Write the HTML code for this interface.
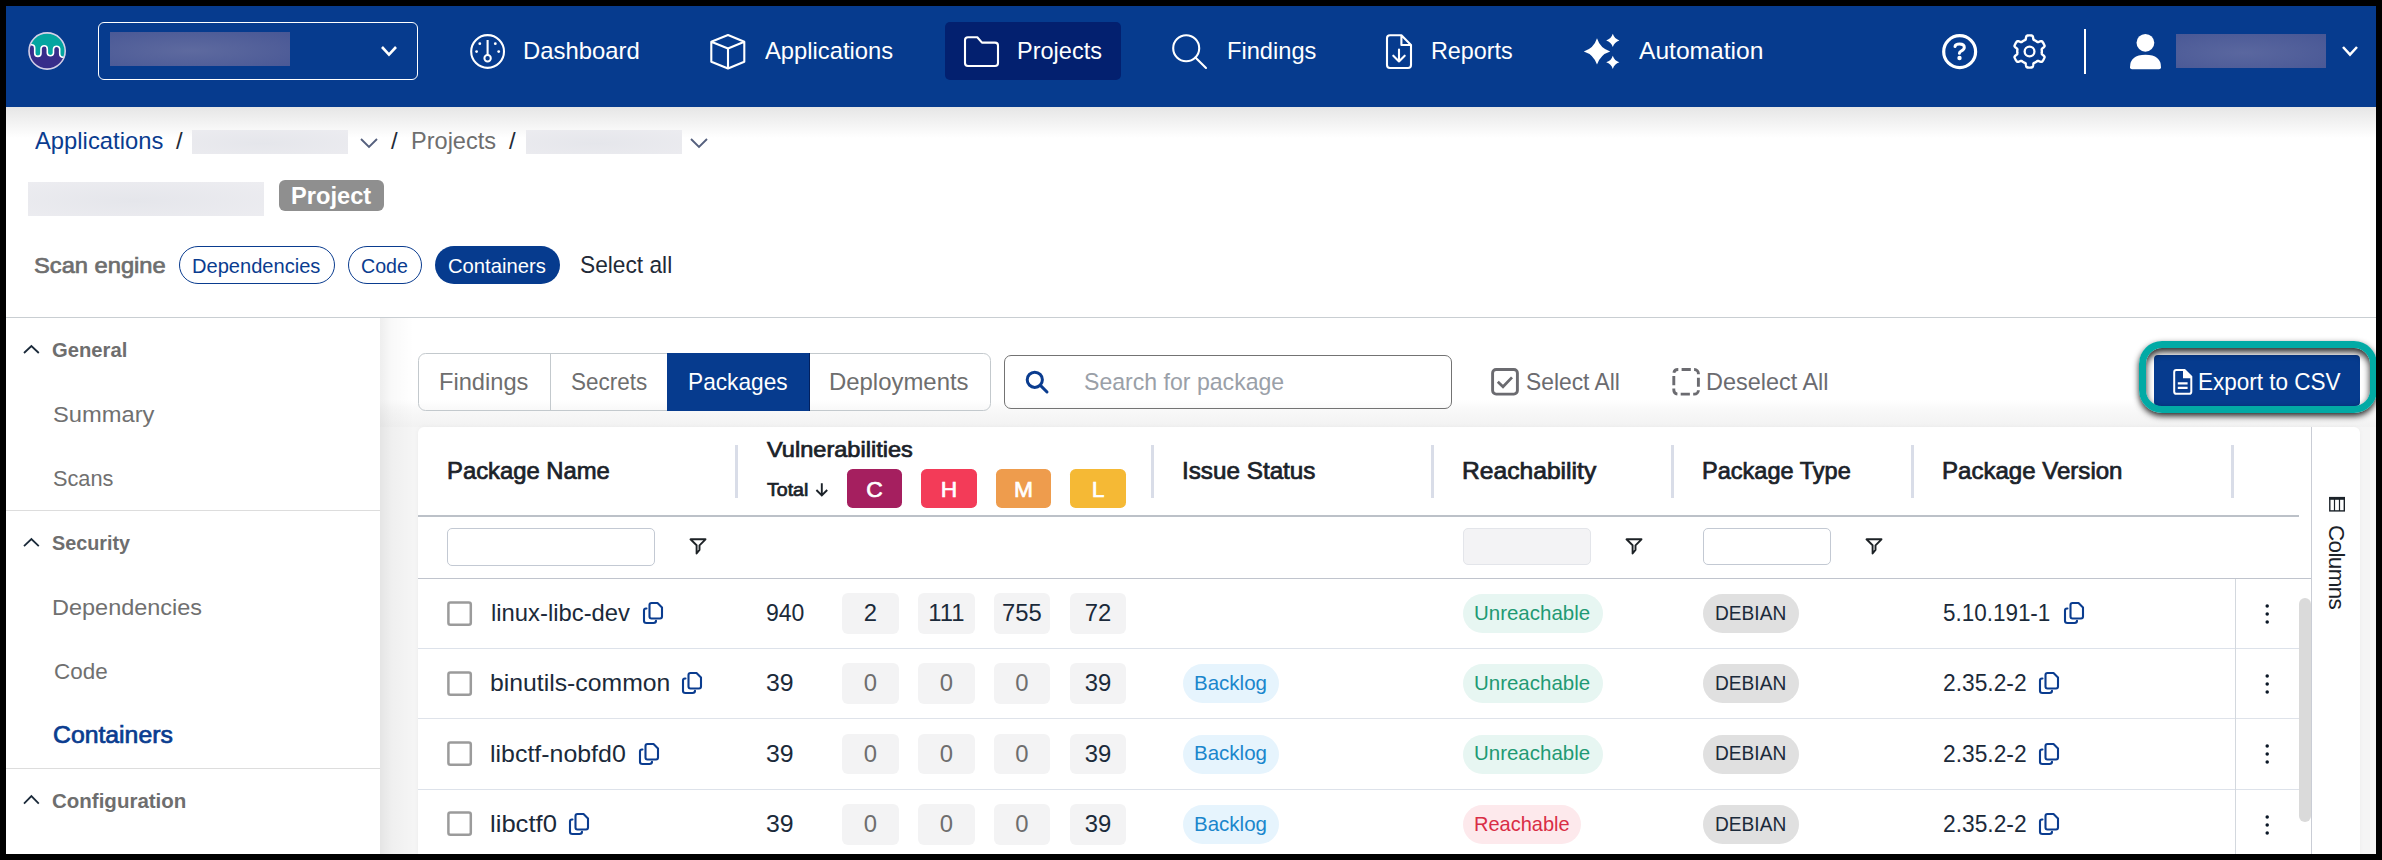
<!DOCTYPE html><html><head><meta charset="utf-8"><style>
html,body{margin:0;padding:0;width:2382px;height:860px;overflow:hidden;background:#000}
body{position:relative;font-family:"Liberation Sans",sans-serif}
.t{position:absolute;white-space:nowrap;font-family:"Liberation Sans",sans-serif}
svg{overflow:visible}
</style></head><body>
<div style="position:absolute;left:6.00px;top:6.00px;width:2370.00px;height:848.00px;background:#ffffff"></div>
<div style="position:absolute;left:6.00px;top:6.00px;width:2370.00px;height:101.00px;background:#063b8e"></div>
<div style="position:absolute;left:6.00px;top:107.00px;width:2370.00px;height:31.00px;background:linear-gradient(#e6e6e6,rgba(255,255,255,0))"></div>
<svg style="position:absolute;left:26.00px;top:30.00px;" width="42.00" height="42.00" viewBox="26.00 30.00 42.00 42.00"><defs><clipPath id="lc"><circle cx="47.1" cy="51" r="18.3"/></clipPath></defs><circle cx="47.1" cy="51" r="18.5" fill="#372d8a"/><g clip-path="url(#lc)"><path d="M28 44.8 L31.5 44.8 Q34.7 44.8 34.7 48 L34.7 53.2 A3.15 3.15 0 0 0 41 53.2 L41 48.9 A3.15 3.15 0 0 1 47.3 48.9 L47.3 53.2 A3.15 3.15 0 0 0 53.5 53.2 L53.5 48.9 A3.15 3.15 0 0 1 59.7 48.9 L59.7 53.4 Q59.7 57 63 57.3 L67 57.6 L67 30 L27 30 Z" fill="#03a5a0"/><path d="M28 44.8 L31.5 44.8 Q34.7 44.8 34.7 48 L34.7 53.2 A3.15 3.15 0 0 0 41 53.2 L41 48.9 A3.15 3.15 0 0 1 47.3 48.9 L47.3 53.2 A3.15 3.15 0 0 0 53.5 53.2 L53.5 48.9 A3.15 3.15 0 0 1 59.7 48.9 L59.7 53.4 Q59.7 57 63 57.3 L67 57.6" fill="none" stroke="#ffffff" stroke-width="1.6"/></g><circle cx="47.1" cy="51" r="18.1" fill="none" stroke="#d3d0e8" stroke-width="1.6"/></svg>
<div style="position:absolute;left:98.00px;top:22.00px;width:320.00px;height:58.00px;box-sizing:border-box;border:1.6px solid #ffffff;border-radius:6px"></div>
<div style="position:absolute;left:110.00px;top:32.00px;width:180.00px;height:34.00px;background:radial-gradient(ellipse at 45% 55%,#5e6a9f,#485795)"></div>
<svg style="position:absolute;left:379.00px;top:44.20px;" width="20.00" height="13.60" viewBox="379.00 44.20 20.00 13.60"><path d="M382.00 47.20 L389.00 54.80 L396.00 47.20" fill="none" stroke="#ffffff" stroke-width="2.60" stroke-linecap="butt" stroke-linejoin="miter"/></svg>
<div style="position:absolute;left:945.00px;top:22.00px;width:176.00px;height:58.00px;background:#03206f;border-radius:5px"></div>
<svg style="position:absolute;left:465.00px;top:29.00px;" width="46.00" height="46.00" viewBox="465.00 29.00 46.00 46.00"><circle cx="487.6" cy="51.5" r="16.4" fill="none" stroke="#ffffff" stroke-width="2.1"/><line x1="487.6" y1="40" x2="487.6" y2="55" stroke="#ffffff" stroke-width="2.1"/><circle cx="487.6" cy="58.3" r="3.2" fill="none" stroke="#ffffff" stroke-width="2"/><circle cx="479.8" cy="43.7" r="1.4" fill="#ffffff"/><circle cx="495.3" cy="43.7" r="1.4" fill="#ffffff"/><circle cx="476.6" cy="51.6" r="1.4" fill="#ffffff"/><circle cx="498.7" cy="51.6" r="1.4" fill="#ffffff"/></svg>
<svg style="position:absolute;left:705.00px;top:30.00px;" width="46.00" height="44.00" viewBox="705.00 30.00 46.00 44.00"><path d="M728 35 L744.3 41.8 L744.3 61.8 L728 68.5 L711.3 61.8 L711.3 41.8 Z M711.3 41.8 L728 48.5 L744.3 41.8 M728 48.5 L728 68.5" fill="none" stroke="#ffffff" stroke-width="2.1" stroke-linejoin="round"/></svg>
<svg style="position:absolute;left:960.00px;top:32.00px;" width="44.00" height="40.00" viewBox="960.00 32.00 44.00 40.00"><path d="M968 37.2 H977.3 L982 42.6 H995 Q998 42.6 998 45.6 V63 Q998 66 995 66 H968 Q965 66 965 63 V40.2 Q965 37.2 968 37.2 Z" fill="none" stroke="#ffffff" stroke-width="2.1" stroke-linejoin="round"/></svg>
<svg style="position:absolute;left:1168.00px;top:30.00px;" width="44.00" height="44.00" viewBox="1168.00 30.00 44.00 44.00"><circle cx="1186.2" cy="48.2" r="13" fill="none" stroke="#ffffff" stroke-width="2.1"/><line x1="1195.4" y1="57.4" x2="1206" y2="68" stroke="#ffffff" stroke-width="2.1" stroke-linecap="round"/></svg>
<svg style="position:absolute;left:1382.00px;top:30.00px;" width="34.00" height="44.00" viewBox="1382.00 30.00 34.00 44.00"><path d="M1390 35.2 H1401.4 L1411 45 V65 Q1411 68 1408 68 H1390 Q1387 68 1387 65 V38.2 Q1387 35.2 1390 35.2 Z M1401.4 35.2 V45 H1411" fill="none" stroke="#ffffff" stroke-width="2.1" stroke-linejoin="round"/><path d="M1399 49.5 V61.5 M1393.3 55.7 L1399 61.5 L1404.7 55.7" fill="none" stroke="#ffffff" stroke-width="2.1" stroke-linecap="round" stroke-linejoin="round"/></svg>
<svg style="position:absolute;left:1580.00px;top:34.00px;" width="40.00" height="34.00" viewBox="1580.00 34.00 40.00 34.00"><path d="M1597.00 38.20 Q1600.17 48.23 1610.20 51.40 Q1600.17 54.57 1597.00 64.60 Q1593.83 54.57 1583.80 51.40 Q1593.83 48.23 1597.00 38.20 Z" fill="#ffffff"/><path d="M1612.80 33.80 Q1614.38 38.82 1619.40 40.40 Q1614.38 41.98 1612.80 47.00 Q1611.22 41.98 1606.20 40.40 Q1611.22 38.82 1612.80 33.80 Z" fill="#ffffff"/><path d="M1612.80 55.70 Q1614.38 60.72 1619.40 62.30 Q1614.38 63.88 1612.80 68.90 Q1611.22 63.88 1606.20 62.30 Q1611.22 60.72 1612.80 55.70 Z" fill="#ffffff"/></svg>
<svg style="position:absolute;left:1940.00px;top:32.00px;" width="40.00" height="40.00" viewBox="1940.00 32.00 40.00 40.00"><circle cx="1959.65" cy="51.65" r="15.95" fill="none" stroke="#ffffff" stroke-width="3.2"/><path d="M1955 46.4 Q1955.4 43.9 1959.6 43.9 Q1964.3 43.9 1964.3 47.3 Q1964.3 49.5 1961.5 50.8 Q1959.4 51.8 1959.4 53.2" fill="none" stroke="#ffffff" stroke-width="3" stroke-linecap="round" stroke-linejoin="round"/><circle cx="1959.5" cy="58" r="2.2" fill="#ffffff"/></svg>
<svg style="position:absolute;left:2010.00px;top:32.00px;" width="40.00" height="40.00" viewBox="2010.00 32.00 40.00 40.00"><path d="M2041.85 51.50 L2041.85 51.71 L2041.84 51.93 L2041.83 52.14 L2041.82 52.36 L2041.80 52.57 L2041.78 52.79 L2041.76 53.00 L2041.73 53.21 L2041.70 53.42 L2041.66 53.64 L2041.70 53.86 L2041.88 54.12 L2042.17 54.41 L2042.56 54.74 L2043.00 55.11 L2043.46 55.49 L2043.88 55.88 L2044.24 56.27 L2044.49 56.64 L2044.61 56.98 L2044.58 57.27 L2044.48 57.53 L2044.37 57.79 L2044.26 58.05 L2044.14 58.30 L2044.02 58.56 L2043.90 58.81 L2043.77 59.06 L2043.63 59.31 L2043.49 59.55 L2043.35 59.79 L2043.20 60.03 L2043.05 60.27 L2042.90 60.50 L2042.74 60.73 L2042.58 60.96 L2042.41 61.19 L2042.24 61.41 L2042.06 61.63 L2041.82 61.80 L2041.47 61.86 L2041.03 61.83 L2040.51 61.72 L2039.96 61.55 L2039.40 61.35 L2038.87 61.15 L2038.39 60.98 L2037.98 60.86 L2037.67 60.84 L2037.46 60.92 L2037.29 61.06 L2037.12 61.19 L2036.95 61.32 L2036.78 61.45 L2036.60 61.58 L2036.43 61.70 L2036.25 61.82 L2036.07 61.93 L2035.88 62.04 L2035.70 62.15 L2035.51 62.26 L2035.32 62.36 L2035.13 62.46 L2034.94 62.56 L2034.75 62.65 L2034.55 62.74 L2034.36 62.82 L2034.16 62.90 L2033.96 62.98 L2033.76 63.06 L2033.58 63.20 L2033.44 63.48 L2033.34 63.89 L2033.25 64.39 L2033.16 64.95 L2033.05 65.54 L2032.92 66.11 L2032.76 66.61 L2032.56 67.01 L2032.33 67.28 L2032.07 67.40 L2031.79 67.44 L2031.51 67.48 L2031.23 67.51 L2030.95 67.54 L2030.67 67.56 L2030.39 67.58 L2030.11 67.59 L2029.83 67.60 L2029.55 67.60 L2029.27 67.60 L2028.99 67.59 L2028.71 67.58 L2028.43 67.56 L2028.15 67.54 L2027.87 67.51 L2027.59 67.48 L2027.31 67.44 L2027.03 67.40 L2026.77 67.28 L2026.54 67.01 L2026.34 66.61 L2026.18 66.11 L2026.05 65.54 L2025.94 64.95 L2025.85 64.39 L2025.76 63.89 L2025.66 63.48 L2025.52 63.20 L2025.34 63.06 L2025.14 62.98 L2024.94 62.90 L2024.74 62.82 L2024.55 62.74 L2024.35 62.65 L2024.16 62.56 L2023.97 62.46 L2023.78 62.36 L2023.59 62.26 L2023.40 62.15 L2023.22 62.04 L2023.03 61.93 L2022.85 61.82 L2022.67 61.70 L2022.50 61.58 L2022.32 61.45 L2022.15 61.32 L2021.98 61.19 L2021.81 61.06 L2021.64 60.92 L2021.43 60.84 L2021.12 60.86 L2020.71 60.98 L2020.23 61.15 L2019.70 61.35 L2019.14 61.55 L2018.59 61.72 L2018.07 61.83 L2017.63 61.86 L2017.28 61.80 L2017.04 61.63 L2016.86 61.41 L2016.69 61.19 L2016.52 60.96 L2016.36 60.73 L2016.20 60.50 L2016.05 60.27 L2015.90 60.03 L2015.75 59.79 L2015.61 59.55 L2015.47 59.31 L2015.33 59.06 L2015.20 58.81 L2015.08 58.56 L2014.96 58.30 L2014.84 58.05 L2014.73 57.79 L2014.62 57.53 L2014.52 57.27 L2014.49 56.98 L2014.61 56.64 L2014.86 56.27 L2015.22 55.88 L2015.64 55.49 L2016.10 55.11 L2016.54 54.74 L2016.93 54.41 L2017.22 54.12 L2017.40 53.86 L2017.44 53.64 L2017.40 53.42 L2017.37 53.21 L2017.34 53.00 L2017.32 52.79 L2017.30 52.57 L2017.28 52.36 L2017.27 52.14 L2017.26 51.93 L2017.25 51.71 L2017.25 51.50 L2017.25 51.29 L2017.26 51.07 L2017.27 50.86 L2017.28 50.64 L2017.30 50.43 L2017.32 50.21 L2017.34 50.00 L2017.37 49.79 L2017.40 49.58 L2017.44 49.36 L2017.40 49.14 L2017.22 48.88 L2016.93 48.59 L2016.54 48.26 L2016.10 47.89 L2015.64 47.51 L2015.22 47.12 L2014.86 46.73 L2014.61 46.36 L2014.49 46.02 L2014.52 45.73 L2014.62 45.47 L2014.73 45.21 L2014.84 44.95 L2014.96 44.70 L2015.08 44.44 L2015.20 44.19 L2015.33 43.94 L2015.47 43.69 L2015.61 43.45 L2015.75 43.21 L2015.90 42.97 L2016.05 42.73 L2016.20 42.50 L2016.36 42.27 L2016.52 42.04 L2016.69 41.81 L2016.86 41.59 L2017.04 41.37 L2017.28 41.20 L2017.63 41.14 L2018.07 41.17 L2018.59 41.28 L2019.14 41.45 L2019.70 41.65 L2020.23 41.85 L2020.71 42.02 L2021.12 42.14 L2021.43 42.16 L2021.64 42.08 L2021.81 41.94 L2021.98 41.81 L2022.15 41.68 L2022.32 41.55 L2022.50 41.42 L2022.67 41.30 L2022.85 41.18 L2023.03 41.07 L2023.22 40.96 L2023.40 40.85 L2023.59 40.74 L2023.78 40.64 L2023.97 40.54 L2024.16 40.44 L2024.35 40.35 L2024.55 40.26 L2024.74 40.18 L2024.94 40.10 L2025.14 40.02 L2025.34 39.94 L2025.52 39.80 L2025.66 39.52 L2025.76 39.11 L2025.85 38.61 L2025.94 38.05 L2026.05 37.46 L2026.18 36.89 L2026.34 36.39 L2026.54 35.99 L2026.77 35.72 L2027.03 35.60 L2027.31 35.56 L2027.59 35.52 L2027.87 35.49 L2028.15 35.46 L2028.43 35.44 L2028.71 35.42 L2028.99 35.41 L2029.27 35.40 L2029.55 35.40 L2029.83 35.40 L2030.11 35.41 L2030.39 35.42 L2030.67 35.44 L2030.95 35.46 L2031.23 35.49 L2031.51 35.52 L2031.79 35.56 L2032.07 35.60 L2032.33 35.72 L2032.56 35.99 L2032.76 36.39 L2032.92 36.89 L2033.05 37.46 L2033.16 38.05 L2033.25 38.61 L2033.34 39.11 L2033.44 39.52 L2033.58 39.80 L2033.76 39.94 L2033.96 40.02 L2034.16 40.10 L2034.36 40.18 L2034.55 40.26 L2034.75 40.35 L2034.94 40.44 L2035.13 40.54 L2035.32 40.64 L2035.51 40.74 L2035.70 40.85 L2035.88 40.96 L2036.07 41.07 L2036.25 41.18 L2036.43 41.30 L2036.60 41.42 L2036.78 41.55 L2036.95 41.68 L2037.12 41.81 L2037.29 41.94 L2037.46 42.08 L2037.67 42.16 L2037.98 42.14 L2038.39 42.02 L2038.87 41.85 L2039.40 41.65 L2039.96 41.45 L2040.51 41.28 L2041.03 41.17 L2041.47 41.14 L2041.82 41.20 L2042.06 41.37 L2042.24 41.59 L2042.41 41.81 L2042.58 42.04 L2042.74 42.27 L2042.90 42.50 L2043.05 42.73 L2043.20 42.97 L2043.35 43.21 L2043.49 43.45 L2043.63 43.69 L2043.77 43.94 L2043.90 44.19 L2044.02 44.44 L2044.14 44.70 L2044.26 44.95 L2044.37 45.21 L2044.48 45.47 L2044.58 45.73 L2044.61 46.02 L2044.49 46.36 L2044.24 46.73 L2043.88 47.12 L2043.46 47.51 L2043.00 47.89 L2042.56 48.26 L2042.17 48.59 L2041.88 48.88 L2041.70 49.14 L2041.66 49.36 L2041.70 49.58 L2041.73 49.79 L2041.76 50.00 L2041.78 50.21 L2041.80 50.43 L2041.82 50.64 L2041.83 50.86 L2041.84 51.07 L2041.85 51.29 Z" fill="none" stroke="#ffffff" stroke-width="2.4" stroke-linejoin="round"/><circle cx="2029.55" cy="51.5" r="4.9" fill="none" stroke="#ffffff" stroke-width="2.3"/></svg>
<div style="position:absolute;left:2084.00px;top:29.00px;width:2.00px;height:45.00px;background:#ffffff"></div>
<svg style="position:absolute;left:2126.00px;top:32.00px;" width="40.00" height="40.00" viewBox="2126.00 32.00 40.00 40.00"><circle cx="2145.4" cy="42.8" r="8.9" fill="#ffffff"/><path d="M2130 67.2 Q2130 54.7 2145.5 54.7 Q2161 54.7 2161 67.2 Q2161 69.2 2159 69.2 H2132 Q2130 69.2 2130 67.2 Z" fill="#ffffff"/></svg>
<div style="position:absolute;left:2176.00px;top:34.00px;width:150.00px;height:34.00px;background:radial-gradient(ellipse at 45% 55%,#5a679f,#485795)"></div>
<svg style="position:absolute;left:2340.00px;top:44.40px;" width="20.00" height="13.60" viewBox="2340.00 44.40 20.00 13.60"><path d="M2343.00 47.40 L2350.00 55.00 L2357.00 47.40" fill="none" stroke="#ffffff" stroke-width="2.50" stroke-linecap="butt" stroke-linejoin="miter"/></svg>
<div style="position:absolute;left:192.00px;top:130.00px;width:156.00px;height:24.00px;background:radial-gradient(ellipse at 45% 55%,#e5e6eb,#ececf0)"></div>
<div style="position:absolute;left:526.00px;top:130.00px;width:156.00px;height:24.00px;background:radial-gradient(ellipse at 45% 55%,#e5e6eb,#ececf0)"></div>
<svg style="position:absolute;left:357.50px;top:135.80px;" width="22.00" height="14.00" viewBox="357.50 135.80 22.00 14.00"><path d="M360.50 138.80 L368.50 146.80 L376.50 138.80" fill="none" stroke="#55607e" stroke-width="1.90" stroke-linecap="butt" stroke-linejoin="miter"/></svg>
<svg style="position:absolute;left:687.50px;top:135.80px;" width="22.00" height="14.00" viewBox="687.50 135.80 22.00 14.00"><path d="M690.50 138.80 L698.50 146.80 L706.50 138.80" fill="none" stroke="#55607e" stroke-width="1.90" stroke-linecap="butt" stroke-linejoin="miter"/></svg>
<div style="position:absolute;left:28.00px;top:182.00px;width:236.00px;height:34.00px;background:radial-gradient(ellipse at 45% 55%,#e5e6eb,#ededf1)"></div>
<div style="position:absolute;left:279.00px;top:180.00px;width:105.00px;height:31.00px;background:#8f8f8f;border-radius:6px"></div>
<div style="position:absolute;left:179.20px;top:246.10px;width:155.50px;height:38.40px;box-sizing:border-box;border:1.5px solid #0a3c8f;border-radius:20px"></div>
<div style="position:absolute;left:347.90px;top:246.10px;width:73.90px;height:38.40px;box-sizing:border-box;border:1.5px solid #0a3c8f;border-radius:20px"></div>
<div style="position:absolute;left:434.90px;top:246.10px;width:124.90px;height:38.40px;background:#063b8e;border-radius:20px"></div>
<div style="position:absolute;left:6.00px;top:317.00px;width:2370.00px;height:1.40px;background:#c9ced2"></div>
<div style="position:absolute;left:380.00px;top:318.30px;width:1996.00px;height:535.70px;background:#f5f5f5"></div>
<div style="position:absolute;left:380.00px;top:318.30px;width:1996.00px;height:81.70px;background:#ffffff"></div>
<div style="position:absolute;left:380.00px;top:400.00px;width:1996.00px;height:27.00px;background:linear-gradient(#ffffff,#f8f8f8 40%,#f2f2f2)"></div>
<div style="position:absolute;left:380.00px;top:318.30px;width:34.00px;height:535.70px;background:linear-gradient(90deg,rgba(0,0,0,0.065),rgba(0,0,0,0.025) 35%,rgba(0,0,0,0))"></div>
<div style="position:absolute;left:6.00px;top:509.50px;width:374.00px;height:1.30px;background:#dddddd"></div>
<div style="position:absolute;left:6.00px;top:768.00px;width:374.00px;height:1.30px;background:#dddddd"></div>
<svg style="position:absolute;left:20.50px;top:342.60px;" width="20.80" height="13.00" viewBox="20.50 342.60 20.80 13.00"><path d="M23.50 352.60 L30.90 345.60 L38.30 352.60" fill="none" stroke="#1b2a3a" stroke-width="1.80"/></svg>
<svg style="position:absolute;left:20.50px;top:536.40px;" width="20.80" height="13.10" viewBox="20.50 536.40 20.80 13.10"><path d="M23.50 546.50 L30.90 539.40 L38.30 546.50" fill="none" stroke="#1b2a3a" stroke-width="1.80"/></svg>
<svg style="position:absolute;left:20.50px;top:793.00px;" width="20.80" height="13.60" viewBox="20.50 793.00 20.80 13.60"><path d="M23.50 803.60 L30.90 796.00 L38.30 803.60" fill="none" stroke="#1b2a3a" stroke-width="1.80"/></svg>
<div style="position:absolute;left:418.00px;top:353.00px;width:573.00px;height:58.00px;box-sizing:border-box;border:1.4px solid #c3c9cd;border-radius:7.5px"></div>
<div style="position:absolute;left:550.00px;top:353.00px;width:1.20px;height:58.00px;background:#c3c9cd"></div>
<div style="position:absolute;left:667.00px;top:353.00px;width:142.50px;height:58.00px;background:#063b8e"></div>
<div style="position:absolute;left:808.60px;top:353.00px;width:1.00px;height:58.00px;background:#02205e"></div>
<div style="position:absolute;left:1004.00px;top:355.00px;width:448.00px;height:54.00px;box-sizing:border-box;border:1.5px solid #737373;border-radius:7px"></div>
<svg style="position:absolute;left:1022.00px;top:366.00px;" width="30.00" height="30.00" viewBox="1022.00 366.00 30.00 30.00"><circle cx="1034.8" cy="379.8" r="7.6" fill="none" stroke="#0a3c8f" stroke-width="3"/><line x1="1040.4" y1="385.4" x2="1047" y2="392" stroke="#0a3c8f" stroke-width="3" stroke-linecap="round"/></svg>
<svg style="position:absolute;left:1488.00px;top:365.00px;" width="34.00" height="34.00" viewBox="1488.00 365.00 34.00 34.00"><rect x="1492.6" y="369.5" width="24.8" height="24.6" rx="3.5" fill="none" stroke="#6b6b70" stroke-width="2.9"/><path d="M1497.8 381.8 L1503 386.8 L1512 377.4" fill="none" stroke="#6b6b70" stroke-width="2.8"/></svg>
<svg style="position:absolute;left:1669.00px;top:365.00px;" width="34.00" height="34.00" viewBox="1669.00 365.00 34.00 34.00"><rect x="1673.8" y="369.5" width="24.6" height="24.6" rx="4" fill="none" stroke="#6b6b70" stroke-width="2.9" stroke-dasharray="7.28 3.3 9.2 3.3" stroke-dashoffset="6.78"/></svg>
<div style="position:absolute;left:2154.20px;top:354.90px;width:205.90px;height:51.10px;background:#063b8e;border-radius:4px"></div>
<div style="position:absolute;left:2139px;top:341px;width:238px;height:72px;box-sizing:border-box;border:7.8px solid #02aaa5;border-radius:23px;box-shadow:0 3px 6px rgba(0,0,0,0.85), inset 0 4px 7px rgba(0,0,0,0.85)"></div>
<svg style="position:absolute;left:2170.00px;top:366.00px;" width="26.00" height="32.00" viewBox="2170.00 366.00 26.00 32.00"><path d="M2176.3 370 H2184.6 L2191.3 376.7 V391.7 Q2191.3 393.8 2189.2 393.8 H2176.3 Q2174.2 393.8 2174.2 391.7 V372.1 Q2174.2 370 2176.3 370 Z" fill="none" stroke="#ffffff" stroke-width="2"/><path d="M2184 370 V377.3 H2191.3" fill="#ffffff" stroke="#ffffff" stroke-width="2"/><path d="M2177.8 383.3 H2187.6 M2177.8 387.8 H2187.6" stroke="#ffffff" stroke-width="2.2"/></svg>
<div style="position:absolute;left:418.00px;top:427.00px;width:1942.00px;height:427.00px;background:#ffffff;border-radius:6px 6px 0 0;box-shadow:0 0 5px rgba(0,0,0,0.04)"></div>
<div style="position:absolute;left:418.00px;top:515.00px;width:1881.00px;height:2.00px;background:#bcc1c8"></div>
<div style="position:absolute;left:418.00px;top:578.00px;width:1893.00px;height:1.00px;background:#c0c4cd"></div>
<div style="position:absolute;left:418.00px;top:648.00px;width:1881.00px;height:1.00px;background:#dde2ea"></div>
<div style="position:absolute;left:418.00px;top:718.20px;width:1881.00px;height:1.00px;background:#dfe3ea"></div>
<div style="position:absolute;left:418.00px;top:789.00px;width:1881.00px;height:1.00px;background:#dde2ea"></div>
<div style="position:absolute;left:735.00px;top:445.00px;width:3.00px;height:53.00px;background:#d9dde8"></div>
<div style="position:absolute;left:1151.00px;top:445.00px;width:3.00px;height:53.00px;background:#d9dde8"></div>
<div style="position:absolute;left:1430.80px;top:445.00px;width:3.00px;height:53.00px;background:#d9dde8"></div>
<div style="position:absolute;left:1670.80px;top:445.00px;width:3.00px;height:53.00px;background:#d9dde8"></div>
<div style="position:absolute;left:1910.80px;top:445.00px;width:3.00px;height:53.00px;background:#d9dde8"></div>
<div style="position:absolute;left:2231.00px;top:445.00px;width:3.00px;height:53.00px;background:#d9dde8"></div>
<div style="position:absolute;left:2234.90px;top:578.80px;width:1.20px;height:275.20px;background:#d3d8de"></div>
<div style="position:absolute;left:2311.00px;top:427.00px;width:1.20px;height:427.00px;background:#c9cdd5"></div>
<div style="position:absolute;left:2299.00px;top:598.00px;width:12.00px;height:223.50px;background:#dadada;border-radius:6px"></div>
<div style="position:absolute;left:847.00px;top:469.10px;width:55.00px;height:38.80px;background:#a51f5f;border-radius:5.6px"></div>
<div style="position:absolute;left:921.20px;top:469.10px;width:55.60px;height:38.80px;background:#f33b58;border-radius:5.6px"></div>
<div style="position:absolute;left:996.20px;top:469.10px;width:54.80px;height:38.80px;background:#ee9c4d;border-radius:5.6px"></div>
<div style="position:absolute;left:1070.00px;top:469.10px;width:56.00px;height:38.80px;background:#f5b935;border-radius:5.6px"></div>
<svg style="position:absolute;left:812.00px;top:480.00px;" width="20.00" height="20.00" viewBox="812.00 480.00 20.00 20.00"><path d="M821.8 483.2 V495.4 M816.4 490 L821.8 495.4 L827.2 490" fill="none" stroke="#1b2229" stroke-width="1.9"/></svg>
<div style="position:absolute;left:447.30px;top:528.30px;width:207.50px;height:37.30px;box-sizing:border-box;border:1.5px solid #c3c9d3;border-radius:5px"></div>
<div style="position:absolute;left:1463.00px;top:528.00px;width:128.00px;height:37.00px;box-sizing:border-box;border:1px solid #e3e5ea;border-radius:5px;background:#f3f3f5"></div>
<div style="position:absolute;left:1703.00px;top:528.00px;width:128.00px;height:37.00px;box-sizing:border-box;border:1.5px solid #c3c9d3;border-radius:5px"></div>
<svg style="position:absolute;left:686.50px;top:536.30px;" width="22.00" height="20.00" viewBox="686.50 536.30 22.00 20.00"><path d="M690.00 539.60 H705.00 L699.00 545.60 V550.20 L696.10 553.80 V545.60 Z" fill="none" stroke="#1d2226" stroke-width="1.9" stroke-linejoin="round"/></svg>
<svg style="position:absolute;left:1622.50px;top:536.30px;" width="22.00" height="20.00" viewBox="1622.50 536.30 22.00 20.00"><path d="M1626.00 539.60 H1641.00 L1635.00 545.60 V550.20 L1632.10 553.80 V545.60 Z" fill="none" stroke="#1d2226" stroke-width="1.9" stroke-linejoin="round"/></svg>
<svg style="position:absolute;left:1862.50px;top:536.30px;" width="22.00" height="20.00" viewBox="1862.50 536.30 22.00 20.00"><path d="M1866.00 539.60 H1881.00 L1875.00 545.60 V550.20 L1872.10 553.80 V545.60 Z" fill="none" stroke="#1d2226" stroke-width="1.9" stroke-linejoin="round"/></svg>
<svg style="position:absolute;left:444.00px;top:597.50px;" width="32.00" height="32.00" viewBox="444.00 597.50 32.00 32.00"><rect x="448.4" y="601.90" width="22.4" height="22.4" rx="2" fill="none" stroke="#9b9b9b" stroke-width="2.5"/></svg>
<div style="position:absolute;left:842.00px;top:593.10px;width:56.90px;height:40.70px;background:#f3f3f4;border-radius:6px"></div>
<div style="position:absolute;left:918.00px;top:593.10px;width:56.80px;height:40.70px;background:#f3f3f4;border-radius:6px"></div>
<div style="position:absolute;left:994.00px;top:593.10px;width:55.80px;height:40.70px;background:#f3f3f4;border-radius:6px"></div>
<div style="position:absolute;left:1070.00px;top:593.10px;width:56.00px;height:40.70px;background:#f3f3f4;border-radius:6px"></div>
<div style="position:absolute;left:1463.00px;top:594.10px;width:140.00px;height:38.90px;background:#e7f6f2;border-radius:20px"></div>
<div style="position:absolute;left:1703.00px;top:594.10px;width:96.00px;height:38.90px;background:#e0e0e0;border-radius:20px"></div>
<svg style="position:absolute;left:2263.00px;top:602.80px;" width="8.00" height="6.00" viewBox="2263.00 602.80 8.00 6.00"><circle cx="2267.2" cy="605.80" r="1.75" fill="#0b1726"/></svg>
<svg style="position:absolute;left:2263.00px;top:610.70px;" width="8.00" height="6.00" viewBox="2263.00 610.70 8.00 6.00"><circle cx="2267.2" cy="613.70" r="1.75" fill="#0b1726"/></svg>
<svg style="position:absolute;left:2263.00px;top:618.60px;" width="8.00" height="6.00" viewBox="2263.00 618.60 8.00 6.00"><circle cx="2267.2" cy="621.60" r="1.75" fill="#0b1726"/></svg>
<svg style="position:absolute;left:444.00px;top:667.80px;" width="32.00" height="32.00" viewBox="444.00 667.80 32.00 32.00"><rect x="448.4" y="672.20" width="22.4" height="22.4" rx="2" fill="none" stroke="#9b9b9b" stroke-width="2.5"/></svg>
<div style="position:absolute;left:842.00px;top:663.40px;width:56.90px;height:40.70px;background:#f3f3f4;border-radius:6px"></div>
<div style="position:absolute;left:918.00px;top:663.40px;width:56.80px;height:40.70px;background:#f3f3f4;border-radius:6px"></div>
<div style="position:absolute;left:994.00px;top:663.40px;width:55.80px;height:40.70px;background:#f3f3f4;border-radius:6px"></div>
<div style="position:absolute;left:1070.00px;top:663.40px;width:56.00px;height:40.70px;background:#f3f3f4;border-radius:6px"></div>
<div style="position:absolute;left:1183.00px;top:664.30px;width:96.00px;height:39.00px;background:#e6f4fd;border-radius:20px"></div>
<div style="position:absolute;left:1463.00px;top:664.40px;width:140.00px;height:38.90px;background:#e7f6f2;border-radius:20px"></div>
<div style="position:absolute;left:1703.00px;top:664.40px;width:96.00px;height:38.90px;background:#e0e0e0;border-radius:20px"></div>
<svg style="position:absolute;left:2263.00px;top:673.10px;" width="8.00" height="6.00" viewBox="2263.00 673.10 8.00 6.00"><circle cx="2267.2" cy="676.10" r="1.75" fill="#0b1726"/></svg>
<svg style="position:absolute;left:2263.00px;top:681.00px;" width="8.00" height="6.00" viewBox="2263.00 681.00 8.00 6.00"><circle cx="2267.2" cy="684.00" r="1.75" fill="#0b1726"/></svg>
<svg style="position:absolute;left:2263.00px;top:688.90px;" width="8.00" height="6.00" viewBox="2263.00 688.90 8.00 6.00"><circle cx="2267.2" cy="691.90" r="1.75" fill="#0b1726"/></svg>
<svg style="position:absolute;left:444.00px;top:738.10px;" width="32.00" height="32.00" viewBox="444.00 738.10 32.00 32.00"><rect x="448.4" y="742.50" width="22.4" height="22.4" rx="2" fill="none" stroke="#9b9b9b" stroke-width="2.5"/></svg>
<div style="position:absolute;left:842.00px;top:733.70px;width:56.90px;height:40.70px;background:#f3f3f4;border-radius:6px"></div>
<div style="position:absolute;left:918.00px;top:733.70px;width:56.80px;height:40.70px;background:#f3f3f4;border-radius:6px"></div>
<div style="position:absolute;left:994.00px;top:733.70px;width:55.80px;height:40.70px;background:#f3f3f4;border-radius:6px"></div>
<div style="position:absolute;left:1070.00px;top:733.70px;width:56.00px;height:40.70px;background:#f3f3f4;border-radius:6px"></div>
<div style="position:absolute;left:1183.00px;top:734.60px;width:96.00px;height:39.00px;background:#e6f4fd;border-radius:20px"></div>
<div style="position:absolute;left:1463.00px;top:734.70px;width:140.00px;height:38.90px;background:#e7f6f2;border-radius:20px"></div>
<div style="position:absolute;left:1703.00px;top:734.70px;width:96.00px;height:38.90px;background:#e0e0e0;border-radius:20px"></div>
<svg style="position:absolute;left:2263.00px;top:743.40px;" width="8.00" height="6.00" viewBox="2263.00 743.40 8.00 6.00"><circle cx="2267.2" cy="746.40" r="1.75" fill="#0b1726"/></svg>
<svg style="position:absolute;left:2263.00px;top:751.30px;" width="8.00" height="6.00" viewBox="2263.00 751.30 8.00 6.00"><circle cx="2267.2" cy="754.30" r="1.75" fill="#0b1726"/></svg>
<svg style="position:absolute;left:2263.00px;top:759.20px;" width="8.00" height="6.00" viewBox="2263.00 759.20 8.00 6.00"><circle cx="2267.2" cy="762.20" r="1.75" fill="#0b1726"/></svg>
<svg style="position:absolute;left:444.00px;top:808.40px;" width="32.00" height="32.00" viewBox="444.00 808.40 32.00 32.00"><rect x="448.4" y="812.80" width="22.4" height="22.4" rx="2" fill="none" stroke="#9b9b9b" stroke-width="2.5"/></svg>
<div style="position:absolute;left:842.00px;top:804.00px;width:56.90px;height:40.70px;background:#f3f3f4;border-radius:6px"></div>
<div style="position:absolute;left:918.00px;top:804.00px;width:56.80px;height:40.70px;background:#f3f3f4;border-radius:6px"></div>
<div style="position:absolute;left:994.00px;top:804.00px;width:55.80px;height:40.70px;background:#f3f3f4;border-radius:6px"></div>
<div style="position:absolute;left:1070.00px;top:804.00px;width:56.00px;height:40.70px;background:#f3f3f4;border-radius:6px"></div>
<div style="position:absolute;left:1183.00px;top:804.90px;width:96.00px;height:39.00px;background:#e6f4fd;border-radius:20px"></div>
<div style="position:absolute;left:1463.00px;top:805.00px;width:118.00px;height:38.90px;background:#fde9ec;border-radius:20px"></div>
<div style="position:absolute;left:1703.00px;top:805.00px;width:96.00px;height:38.90px;background:#e0e0e0;border-radius:20px"></div>
<svg style="position:absolute;left:2263.00px;top:813.70px;" width="8.00" height="6.00" viewBox="2263.00 813.70 8.00 6.00"><circle cx="2267.2" cy="816.70" r="1.75" fill="#0b1726"/></svg>
<svg style="position:absolute;left:2263.00px;top:821.60px;" width="8.00" height="6.00" viewBox="2263.00 821.60 8.00 6.00"><circle cx="2267.2" cy="824.60" r="1.75" fill="#0b1726"/></svg>
<svg style="position:absolute;left:2263.00px;top:829.50px;" width="8.00" height="6.00" viewBox="2263.00 829.50 8.00 6.00"><circle cx="2267.2" cy="832.50" r="1.75" fill="#0b1726"/></svg>
<svg style="position:absolute;left:642.00px;top:601.00px;" width="22.00" height="24.00" viewBox="642.00 601.00 22.00 24.00"><path d="M651.50 603.00 H657.50 L662.00 607.50 V616.50 Q662.00 618.50 660.00 618.50 H651.50 Q649.50 618.50 649.50 616.50 V605.00 Q649.50 603.00 651.50 603.00 Z" fill="none" stroke="#0a3c8f" stroke-width="2.1" stroke-linejoin="round" stroke-linecap="round"/><path d="M646.50 608.50 H646.00 Q644.00 608.50 644.00 610.50 V621.00 Q644.00 623.00 646.50 623.00 H653.50 Q656.00 623.00 656.00 620.80" fill="none" stroke="#0a3c8f" stroke-width="2.1" stroke-linecap="round"/></svg>
<svg style="position:absolute;left:2063.20px;top:601.00px;" width="22.00" height="24.00" viewBox="2063.20 601.00 22.00 24.00"><path d="M2072.70 603.00 H2078.70 L2083.20 607.50 V616.50 Q2083.20 618.50 2081.20 618.50 H2072.70 Q2070.70 618.50 2070.70 616.50 V605.00 Q2070.70 603.00 2072.70 603.00 Z" fill="none" stroke="#0a3c8f" stroke-width="2.1" stroke-linejoin="round" stroke-linecap="round"/><path d="M2067.70 608.50 H2067.20 Q2065.20 608.50 2065.20 610.50 V621.00 Q2065.20 623.00 2067.70 623.00 H2074.70 Q2077.20 623.00 2077.20 620.80" fill="none" stroke="#0a3c8f" stroke-width="2.1" stroke-linecap="round"/></svg>
<svg style="position:absolute;left:681.40px;top:671.30px;" width="22.00" height="24.00" viewBox="681.40 671.30 22.00 24.00"><path d="M690.90 673.30 H696.90 L701.40 677.80 V686.80 Q701.40 688.80 699.40 688.80 H690.90 Q688.90 688.80 688.90 686.80 V675.30 Q688.90 673.30 690.90 673.30 Z" fill="none" stroke="#0a3c8f" stroke-width="2.1" stroke-linejoin="round" stroke-linecap="round"/><path d="M685.90 678.80 H685.40 Q683.40 678.80 683.40 680.80 V691.30 Q683.40 693.30 685.90 693.30 H692.90 Q695.40 693.30 695.40 691.10" fill="none" stroke="#0a3c8f" stroke-width="2.1" stroke-linecap="round"/></svg>
<svg style="position:absolute;left:2038.00px;top:671.30px;" width="22.00" height="24.00" viewBox="2038.00 671.30 22.00 24.00"><path d="M2047.50 673.30 H2053.50 L2058.00 677.80 V686.80 Q2058.00 688.80 2056.00 688.80 H2047.50 Q2045.50 688.80 2045.50 686.80 V675.30 Q2045.50 673.30 2047.50 673.30 Z" fill="none" stroke="#0a3c8f" stroke-width="2.1" stroke-linejoin="round" stroke-linecap="round"/><path d="M2042.50 678.80 H2042.00 Q2040.00 678.80 2040.00 680.80 V691.30 Q2040.00 693.30 2042.50 693.30 H2049.50 Q2052.00 693.30 2052.00 691.10" fill="none" stroke="#0a3c8f" stroke-width="2.1" stroke-linecap="round"/></svg>
<svg style="position:absolute;left:637.60px;top:741.60px;" width="22.00" height="24.00" viewBox="637.60 741.60 22.00 24.00"><path d="M647.10 743.60 H653.10 L657.60 748.10 V757.10 Q657.60 759.10 655.60 759.10 H647.10 Q645.10 759.10 645.10 757.10 V745.60 Q645.10 743.60 647.10 743.60 Z" fill="none" stroke="#0a3c8f" stroke-width="2.1" stroke-linejoin="round" stroke-linecap="round"/><path d="M642.10 749.10 H641.60 Q639.60 749.10 639.60 751.10 V761.60 Q639.60 763.60 642.10 763.60 H649.10 Q651.60 763.60 651.60 761.40" fill="none" stroke="#0a3c8f" stroke-width="2.1" stroke-linecap="round"/></svg>
<svg style="position:absolute;left:2038.00px;top:741.60px;" width="22.00" height="24.00" viewBox="2038.00 741.60 22.00 24.00"><path d="M2047.50 743.60 H2053.50 L2058.00 748.10 V757.10 Q2058.00 759.10 2056.00 759.10 H2047.50 Q2045.50 759.10 2045.50 757.10 V745.60 Q2045.50 743.60 2047.50 743.60 Z" fill="none" stroke="#0a3c8f" stroke-width="2.1" stroke-linejoin="round" stroke-linecap="round"/><path d="M2042.50 749.10 H2042.00 Q2040.00 749.10 2040.00 751.10 V761.60 Q2040.00 763.60 2042.50 763.60 H2049.50 Q2052.00 763.60 2052.00 761.40" fill="none" stroke="#0a3c8f" stroke-width="2.1" stroke-linecap="round"/></svg>
<svg style="position:absolute;left:567.50px;top:811.90px;" width="22.00" height="24.00" viewBox="567.50 811.90 22.00 24.00"><path d="M577.00 813.90 H583.00 L587.50 818.40 V827.40 Q587.50 829.40 585.50 829.40 H577.00 Q575.00 829.40 575.00 827.40 V815.90 Q575.00 813.90 577.00 813.90 Z" fill="none" stroke="#0a3c8f" stroke-width="2.1" stroke-linejoin="round" stroke-linecap="round"/><path d="M572.00 819.40 H571.50 Q569.50 819.40 569.50 821.40 V831.90 Q569.50 833.90 572.00 833.90 H579.00 Q581.50 833.90 581.50 831.70" fill="none" stroke="#0a3c8f" stroke-width="2.1" stroke-linecap="round"/></svg>
<svg style="position:absolute;left:2038.00px;top:811.90px;" width="22.00" height="24.00" viewBox="2038.00 811.90 22.00 24.00"><path d="M2047.50 813.90 H2053.50 L2058.00 818.40 V827.40 Q2058.00 829.40 2056.00 829.40 H2047.50 Q2045.50 829.40 2045.50 827.40 V815.90 Q2045.50 813.90 2047.50 813.90 Z" fill="none" stroke="#0a3c8f" stroke-width="2.1" stroke-linejoin="round" stroke-linecap="round"/><path d="M2042.50 819.40 H2042.00 Q2040.00 819.40 2040.00 821.40 V831.90 Q2040.00 833.90 2042.50 833.90 H2049.50 Q2052.00 833.90 2052.00 831.70" fill="none" stroke="#0a3c8f" stroke-width="2.1" stroke-linecap="round"/></svg>
<div class="t" style="left:820.50px;top:601.10px;width:100px;text-align:center;font-size:23.84px;line-height:23.84px;color:#1b2a3a">2</div>
<div class="t" style="left:896.40px;top:601.10px;width:100px;text-align:center;font-size:23.84px;line-height:23.84px;color:#1b2a3a">111</div>
<div class="t" style="left:972.00px;top:601.10px;width:100px;text-align:center;font-size:23.84px;line-height:23.84px;color:#1b2a3a">755</div>
<div class="t" style="left:1048.00px;top:601.10px;width:100px;text-align:center;font-size:23.84px;line-height:23.84px;color:#1b2a3a">72</div>
<div class="t" style="left:820.50px;top:671.40px;width:100px;text-align:center;font-size:23.84px;line-height:23.84px;color:#6e6e6e">0</div>
<div class="t" style="left:896.40px;top:671.40px;width:100px;text-align:center;font-size:23.84px;line-height:23.84px;color:#6e6e6e">0</div>
<div class="t" style="left:972.00px;top:671.40px;width:100px;text-align:center;font-size:23.84px;line-height:23.84px;color:#6e6e6e">0</div>
<div class="t" style="left:1048.00px;top:671.40px;width:100px;text-align:center;font-size:23.84px;line-height:23.84px;color:#1b2a3a">39</div>
<div class="t" style="left:820.50px;top:741.70px;width:100px;text-align:center;font-size:23.84px;line-height:23.84px;color:#6e6e6e">0</div>
<div class="t" style="left:896.40px;top:741.70px;width:100px;text-align:center;font-size:23.84px;line-height:23.84px;color:#6e6e6e">0</div>
<div class="t" style="left:972.00px;top:741.70px;width:100px;text-align:center;font-size:23.84px;line-height:23.84px;color:#6e6e6e">0</div>
<div class="t" style="left:1048.00px;top:741.70px;width:100px;text-align:center;font-size:23.84px;line-height:23.84px;color:#1b2a3a">39</div>
<div class="t" style="left:820.50px;top:812.00px;width:100px;text-align:center;font-size:23.84px;line-height:23.84px;color:#6e6e6e">0</div>
<div class="t" style="left:896.40px;top:812.00px;width:100px;text-align:center;font-size:23.84px;line-height:23.84px;color:#6e6e6e">0</div>
<div class="t" style="left:972.00px;top:812.00px;width:100px;text-align:center;font-size:23.84px;line-height:23.84px;color:#6e6e6e">0</div>
<div class="t" style="left:1048.00px;top:812.00px;width:100px;text-align:center;font-size:23.84px;line-height:23.84px;color:#1b2a3a">39</div>
<div class="t" style="left:844.50px;top:477.70px;width:60px;text-align:center;font-size:22.8px;line-height:22.8px;-webkit-text-stroke:0.7px #ffffff;color:#ffffff">C</div>
<div class="t" style="left:919.00px;top:477.70px;width:60px;text-align:center;font-size:22.8px;line-height:22.8px;-webkit-text-stroke:0.7px #ffffff;color:#ffffff">H</div>
<div class="t" style="left:993.60px;top:477.70px;width:60px;text-align:center;font-size:22.8px;line-height:22.8px;-webkit-text-stroke:0.7px #ffffff;color:#ffffff">M</div>
<div class="t" style="left:1068.00px;top:477.70px;width:60px;text-align:center;font-size:22.8px;line-height:22.8px;-webkit-text-stroke:0.7px #ffffff;color:#ffffff">L</div>
<div class="t" style="left:523.45px;top:40.00px;font-size:23.256px;line-height:23.256px;color:#ffffff;transform-origin:0 0;transform:scaleX(1.0264)">Dashboard</div>
<div class="t" style="left:764.90px;top:40.00px;font-size:23.256px;line-height:23.256px;color:#ffffff;transform-origin:0 0;transform:scaleX(1.0224)">Applications</div>
<div class="t" style="left:1017.28px;top:40.00px;font-size:23.256px;line-height:23.256px;color:#ffffff;transform-origin:0 0;transform:scaleX(1.0111)">Projects</div>
<div class="t" style="left:1226.56px;top:40.00px;font-size:23.256px;line-height:23.256px;color:#ffffff;transform-origin:0 0;transform:scaleX(1.0176)">Findings</div>
<div class="t" style="left:1431.49px;top:40.00px;font-size:23.256px;line-height:23.256px;color:#ffffff;transform-origin:0 0;transform:scaleX(1.0038)">Reports</div>
<div class="t" style="left:1639.00px;top:40.00px;font-size:23.256px;line-height:23.256px;color:#ffffff;transform-origin:0 0;transform:scaleX(1.0578)">Automation</div>
<div class="t" style="left:34.70px;top:129.30px;font-size:23.837px;line-height:23.837px;color:#0a3c8f;transform-origin:0 0;transform:scaleX(0.9984)">Applications</div>
<div class="t" style="left:176.00px;top:129.20px;font-size:23.837px;line-height:23.837px;color:#1f2a37;transform-origin:0 0;transform:scaleX(1.0000)">/</div>
<div class="t" style="left:391.00px;top:129.20px;font-size:23.837px;line-height:23.837px;color:#1f2a37;transform-origin:0 0;transform:scaleX(1.0000)">/</div>
<div class="t" style="left:411.02px;top:129.20px;font-size:23.837px;line-height:23.837px;color:#6e6e6e;transform-origin:0 0;transform:scaleX(0.9880)">Projects</div>
<div class="t" style="left:509.00px;top:129.20px;font-size:23.837px;line-height:23.837px;color:#1f2a37;transform-origin:0 0;transform:scaleX(1.0000)">/</div>
<div class="t" style="left:291.05px;top:183.50px;font-size:24.273px;line-height:24.273px;font-weight:700;color:#ffffff;transform-origin:0 0;transform:scaleX(0.9750)">Project</div>
<div class="t" style="left:34.34px;top:254.70px;font-size:22.384px;line-height:22.384px;-webkit-text-stroke:0.7px #6e6e6e;color:#6e6e6e;transform-origin:0 0;transform:scaleX(1.0585)">Scan engine</div>
<div class="t" style="left:192.37px;top:256.70px;font-size:19.767px;line-height:19.767px;color:#0a3c8f;transform-origin:0 0;transform:scaleX(1.0169)">Dependencies</div>
<div class="t" style="left:361.41px;top:256.70px;font-size:19.767px;line-height:19.767px;color:#0a3c8f;transform-origin:0 0;transform:scaleX(0.9933)">Code</div>
<div class="t" style="left:448.18px;top:256.70px;font-size:19.767px;line-height:19.767px;color:#ffffff;transform-origin:0 0;transform:scaleX(1.0245)">Containers</div>
<div class="t" style="left:579.52px;top:253.70px;font-size:23.256px;line-height:23.256px;color:#1f2a37;transform-origin:0 0;transform:scaleX(0.9772)">Select all</div>
<div class="t" style="left:52.45px;top:340.70px;font-size:19.331px;line-height:19.331px;font-weight:700;color:#6e6e6e;transform-origin:0 0;transform:scaleX(1.0457)">General</div>
<div class="t" style="left:53.07px;top:402.90px;font-size:22.965px;line-height:22.965px;color:#707070;transform-origin:0 0;transform:scaleX(1.0330)">Summary</div>
<div class="t" style="left:53.15px;top:466.70px;font-size:22.965px;line-height:22.965px;color:#707070;transform-origin:0 0;transform:scaleX(0.9468)">Scans</div>
<div class="t" style="left:51.88px;top:534.10px;font-size:19.331px;line-height:19.331px;font-weight:700;color:#6e6e6e;transform-origin:0 0;transform:scaleX(1.0227)">Security</div>
<div class="t" style="left:52.45px;top:595.90px;font-size:22.965px;line-height:22.965px;color:#707070;transform-origin:0 0;transform:scaleX(1.0229)">Dependencies</div>
<div class="t" style="left:53.52px;top:659.80px;font-size:22.965px;line-height:22.965px;color:#707070;transform-origin:0 0;transform:scaleX(0.9774)">Code</div>
<div class="t" style="left:53.25px;top:724.10px;font-size:23.547px;line-height:23.547px;-webkit-text-stroke:0.7px #0a3c8f;color:#0a3c8f;transform-origin:0 0;transform:scaleX(1.0527)">Containers</div>
<div class="t" style="left:52.04px;top:792.10px;font-size:19.331px;line-height:19.331px;font-weight:700;color:#6e6e6e;transform-origin:0 0;transform:scaleX(1.0605)">Configuration</div>
<div class="t" style="left:439.38px;top:371.00px;font-size:23.401px;line-height:23.401px;color:#6e6e6e;transform-origin:0 0;transform:scaleX(1.0116)">Findings</div>
<div class="t" style="left:571.24px;top:371.00px;font-size:23.401px;line-height:23.401px;color:#6e6e6e;transform-origin:0 0;transform:scaleX(0.9597)">Secrets</div>
<div class="t" style="left:688.06px;top:371.20px;font-size:23.401px;line-height:23.401px;color:#ffffff;transform-origin:0 0;transform:scaleX(0.9700)">Packages</div>
<div class="t" style="left:829.26px;top:371.00px;font-size:23.401px;line-height:23.401px;color:#6e6e6e;transform-origin:0 0;transform:scaleX(1.0224)">Deployments</div>
<div class="t" style="left:1084.41px;top:371.00px;font-size:23.256px;line-height:23.256px;color:#9aa0a8;transform-origin:0 0;transform:scaleX(0.9930)">Search for package</div>
<div class="t" style="left:1525.52px;top:370.90px;font-size:23.328px;line-height:23.328px;color:#6b6b70;transform-origin:0 0;transform:scaleX(0.9785)">Select All</div>
<div class="t" style="left:1706.19px;top:370.90px;font-size:23.328px;line-height:23.328px;color:#6b6b70;transform-origin:0 0;transform:scaleX(1.0051)">Deselect All</div>
<div class="t" style="left:2197.66px;top:371.00px;font-size:23.256px;line-height:23.256px;color:#ffffff;transform-origin:0 0;transform:scaleX(0.9683)">Export to CSV</div>
<div class="t" style="left:446.54px;top:459.90px;font-size:23.110px;line-height:23.110px;-webkit-text-stroke:0.7px #1b2229;color:#1b2229;transform-origin:0 0;transform:scaleX(1.0308)">Package Name</div>
<div class="t" style="left:767.05px;top:439.80px;font-size:21.512px;line-height:21.512px;-webkit-text-stroke:0.7px #1b2229;color:#1b2229;transform-origin:0 0;transform:scaleX(1.0959)">Vulnerabilities</div>
<div class="t" style="left:767.40px;top:480.80px;font-size:18.314px;line-height:18.314px;-webkit-text-stroke:0.7px #1b2229;color:#1b2229;transform-origin:0 0;transform:scaleX(1.0684)">Total</div>
<div class="t" style="left:1181.80px;top:460.00px;font-size:23.110px;line-height:23.110px;-webkit-text-stroke:0.7px #1b2229;color:#1b2229;transform-origin:0 0;transform:scaleX(1.0496)">Issue Status</div>
<div class="t" style="left:1462.37px;top:460.00px;font-size:23.110px;line-height:23.110px;-webkit-text-stroke:0.7px #1b2229;color:#1b2229;transform-origin:0 0;transform:scaleX(1.0661)">Reachability</div>
<div class="t" style="left:1702.46px;top:460.00px;font-size:23.110px;line-height:23.110px;-webkit-text-stroke:0.7px #1b2229;color:#1b2229;transform-origin:0 0;transform:scaleX(1.0188)">Package Type</div>
<div class="t" style="left:1942.42px;top:460.00px;font-size:23.110px;line-height:23.110px;-webkit-text-stroke:0.7px #1b2229;color:#1b2229;transform-origin:0 0;transform:scaleX(1.0406)">Package Version</div>
<div class="t" style="left:490.60px;top:601.00px;font-size:23.837px;line-height:23.837px;color:#1b2a3a;transform-origin:0 0;transform:scaleX(0.9993)">linux-libc-dev</div>
<div class="t" style="left:490.22px;top:671.30px;font-size:23.837px;line-height:23.837px;color:#1b2a3a;transform-origin:0 0;transform:scaleX(1.0394)">binutils-common</div>
<div class="t" style="left:490.21px;top:741.60px;font-size:23.837px;line-height:23.837px;color:#1b2a3a;transform-origin:0 0;transform:scaleX(1.0457)">libctf-nobfd0</div>
<div class="t" style="left:490.15px;top:811.90px;font-size:23.837px;line-height:23.837px;color:#1b2a3a;transform-origin:0 0;transform:scaleX(1.0746)">libctf0</div>
<div class="t" style="left:766.43px;top:601.10px;font-size:23.837px;line-height:23.837px;color:#1b2a3a;transform-origin:0 0;transform:scaleX(0.9658)">940</div>
<div class="t" style="left:765.96px;top:671.40px;font-size:23.837px;line-height:23.837px;color:#1b2a3a;transform-origin:0 0;transform:scaleX(1.0417)">39</div>
<div class="t" style="left:765.96px;top:741.70px;font-size:23.837px;line-height:23.837px;color:#1b2a3a;transform-origin:0 0;transform:scaleX(1.0417)">39</div>
<div class="t" style="left:765.96px;top:812.00px;font-size:23.837px;line-height:23.837px;color:#1b2a3a;transform-origin:0 0;transform:scaleX(1.0417)">39</div>
<div class="t" style="left:1942.56px;top:601.10px;font-size:23.837px;line-height:23.837px;color:#1b2a3a;transform-origin:0 0;transform:scaleX(0.9420)">5.10.191-1</div>
<div class="t" style="left:1942.54px;top:671.40px;font-size:23.837px;line-height:23.837px;color:#1b2a3a;transform-origin:0 0;transform:scaleX(0.9565)">2.35.2-2</div>
<div class="t" style="left:1942.54px;top:741.70px;font-size:23.837px;line-height:23.837px;color:#1b2a3a;transform-origin:0 0;transform:scaleX(0.9565)">2.35.2-2</div>
<div class="t" style="left:1942.54px;top:812.00px;font-size:23.837px;line-height:23.837px;color:#1b2a3a;transform-origin:0 0;transform:scaleX(0.9565)">2.35.2-2</div>
<div class="t" style="left:1193.98px;top:673.00px;font-size:20.349px;line-height:20.349px;color:#1a86cc;transform-origin:0 0;transform:scaleX(1.0087)">Backlog</div>
<div class="t" style="left:1193.98px;top:743.30px;font-size:20.349px;line-height:20.349px;color:#1a86cc;transform-origin:0 0;transform:scaleX(1.0087)">Backlog</div>
<div class="t" style="left:1193.98px;top:813.60px;font-size:20.349px;line-height:20.349px;color:#1a86cc;transform-origin:0 0;transform:scaleX(1.0087)">Backlog</div>
<div class="t" style="left:1474.29px;top:602.70px;font-size:20.349px;line-height:20.349px;color:#1f9a74;transform-origin:0 0;transform:scaleX(1.0071)">Unreachable</div>
<div class="t" style="left:1714.92px;top:602.70px;font-size:20.349px;line-height:20.349px;color:#1b2a3a;transform-origin:0 0;transform:scaleX(0.9417)">DEBIAN</div>
<div class="t" style="left:1474.29px;top:673.00px;font-size:20.349px;line-height:20.349px;color:#1f9a74;transform-origin:0 0;transform:scaleX(1.0071)">Unreachable</div>
<div class="t" style="left:1714.92px;top:673.00px;font-size:20.349px;line-height:20.349px;color:#1b2a3a;transform-origin:0 0;transform:scaleX(0.9417)">DEBIAN</div>
<div class="t" style="left:1474.29px;top:743.30px;font-size:20.349px;line-height:20.349px;color:#1f9a74;transform-origin:0 0;transform:scaleX(1.0071)">Unreachable</div>
<div class="t" style="left:1714.92px;top:743.30px;font-size:20.349px;line-height:20.349px;color:#1b2a3a;transform-origin:0 0;transform:scaleX(0.9417)">DEBIAN</div>
<div class="t" style="left:1473.73px;top:813.60px;font-size:20.349px;line-height:20.349px;color:#d92d45;transform-origin:0 0;transform:scaleX(0.9830)">Reachable</div>
<div class="t" style="left:1714.92px;top:813.60px;font-size:20.349px;line-height:20.349px;color:#1b2a3a;transform-origin:0 0;transform:scaleX(0.9417)">DEBIAN</div>
<div class="t" style="left:2329px;top:524.6px;width:84px;height:0;transform-origin:0 0;transform:rotate(90deg)"><div class="t" style="left:0;top:-18px;font-size:22.4px;line-height:22.4px;color:#1b2229;letter-spacing:-0.6px">Columns</div></div>
<svg style="position:absolute;left:2326.00px;top:494.00px;" width="22.00" height="20.00" viewBox="2326.00 494.00 22.00 20.00"><rect x="2329.8" y="497.6" width="14.5" height="13.3" fill="none" stroke="#1b2229" stroke-width="1.4"/><rect x="2329.2" y="497" width="15.7" height="2.8" fill="#1b2229"/><path d="M2334.5 499 V511 M2339.5 499 V511" stroke="#1b2229" stroke-width="1.2"/></svg>
<div style="position:absolute;left:0.00px;top:0.00px;width:2382.00px;height:6.00px;background:#000"></div>
<div style="position:absolute;left:0.00px;top:854.00px;width:2382.00px;height:6.00px;background:#000"></div>
<div style="position:absolute;left:0.00px;top:0.00px;width:6.00px;height:860.00px;background:#000"></div>
<div style="position:absolute;left:2376.00px;top:0.00px;width:6.00px;height:860.00px;background:#000"></div>
</body></html>
